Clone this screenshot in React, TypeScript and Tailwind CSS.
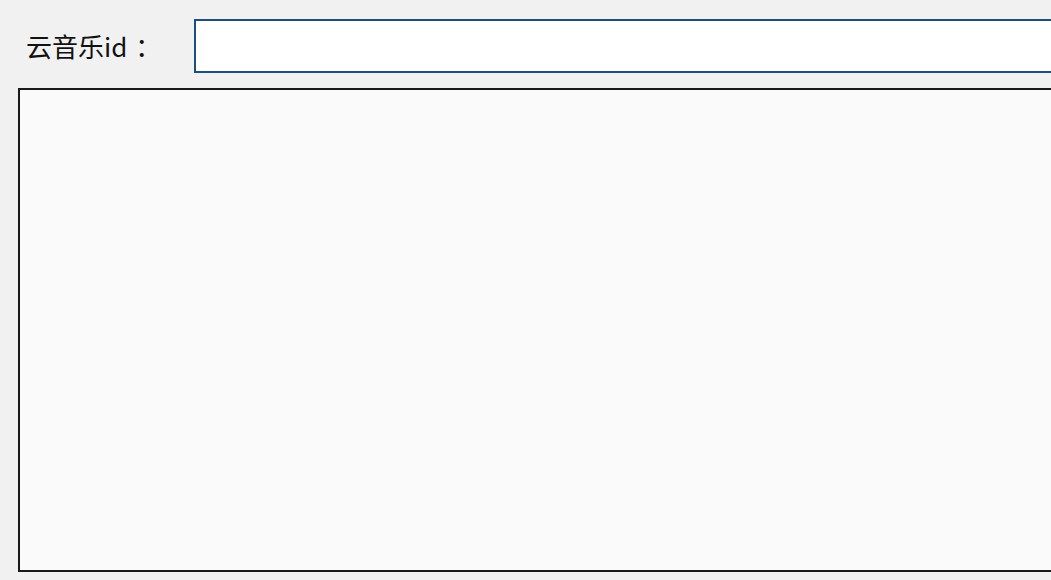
export default function App() {
  return (
    <div className="w-[1051px] h-[580px] overflow-hidden bg-[#f1f1f1] pl-[18px] pt-[19px] flex flex-col gap-[15px]" style={{ fontFamily: '"Noto Sans CJK SC", "Noto Sans", sans-serif' }}>
      <div className="flex items-center">
        <label className="w-[176px] shrink-0 pl-[8px] text-[26px] leading-none text-[#111]">
          云音乐id<span className="ml-[8px]">：</span>
        </label>
        <input className="w-[880px] shrink-0 h-[54px] bg-white border-2 border-[#1d4f7c] outline-none" />
      </div>
      <textarea className="w-[1060px] shrink-0 h-[484px] bg-[#fafafa] border-2 border-[#1a1a1a] resize-none outline-none" />
    </div>
  );
}
